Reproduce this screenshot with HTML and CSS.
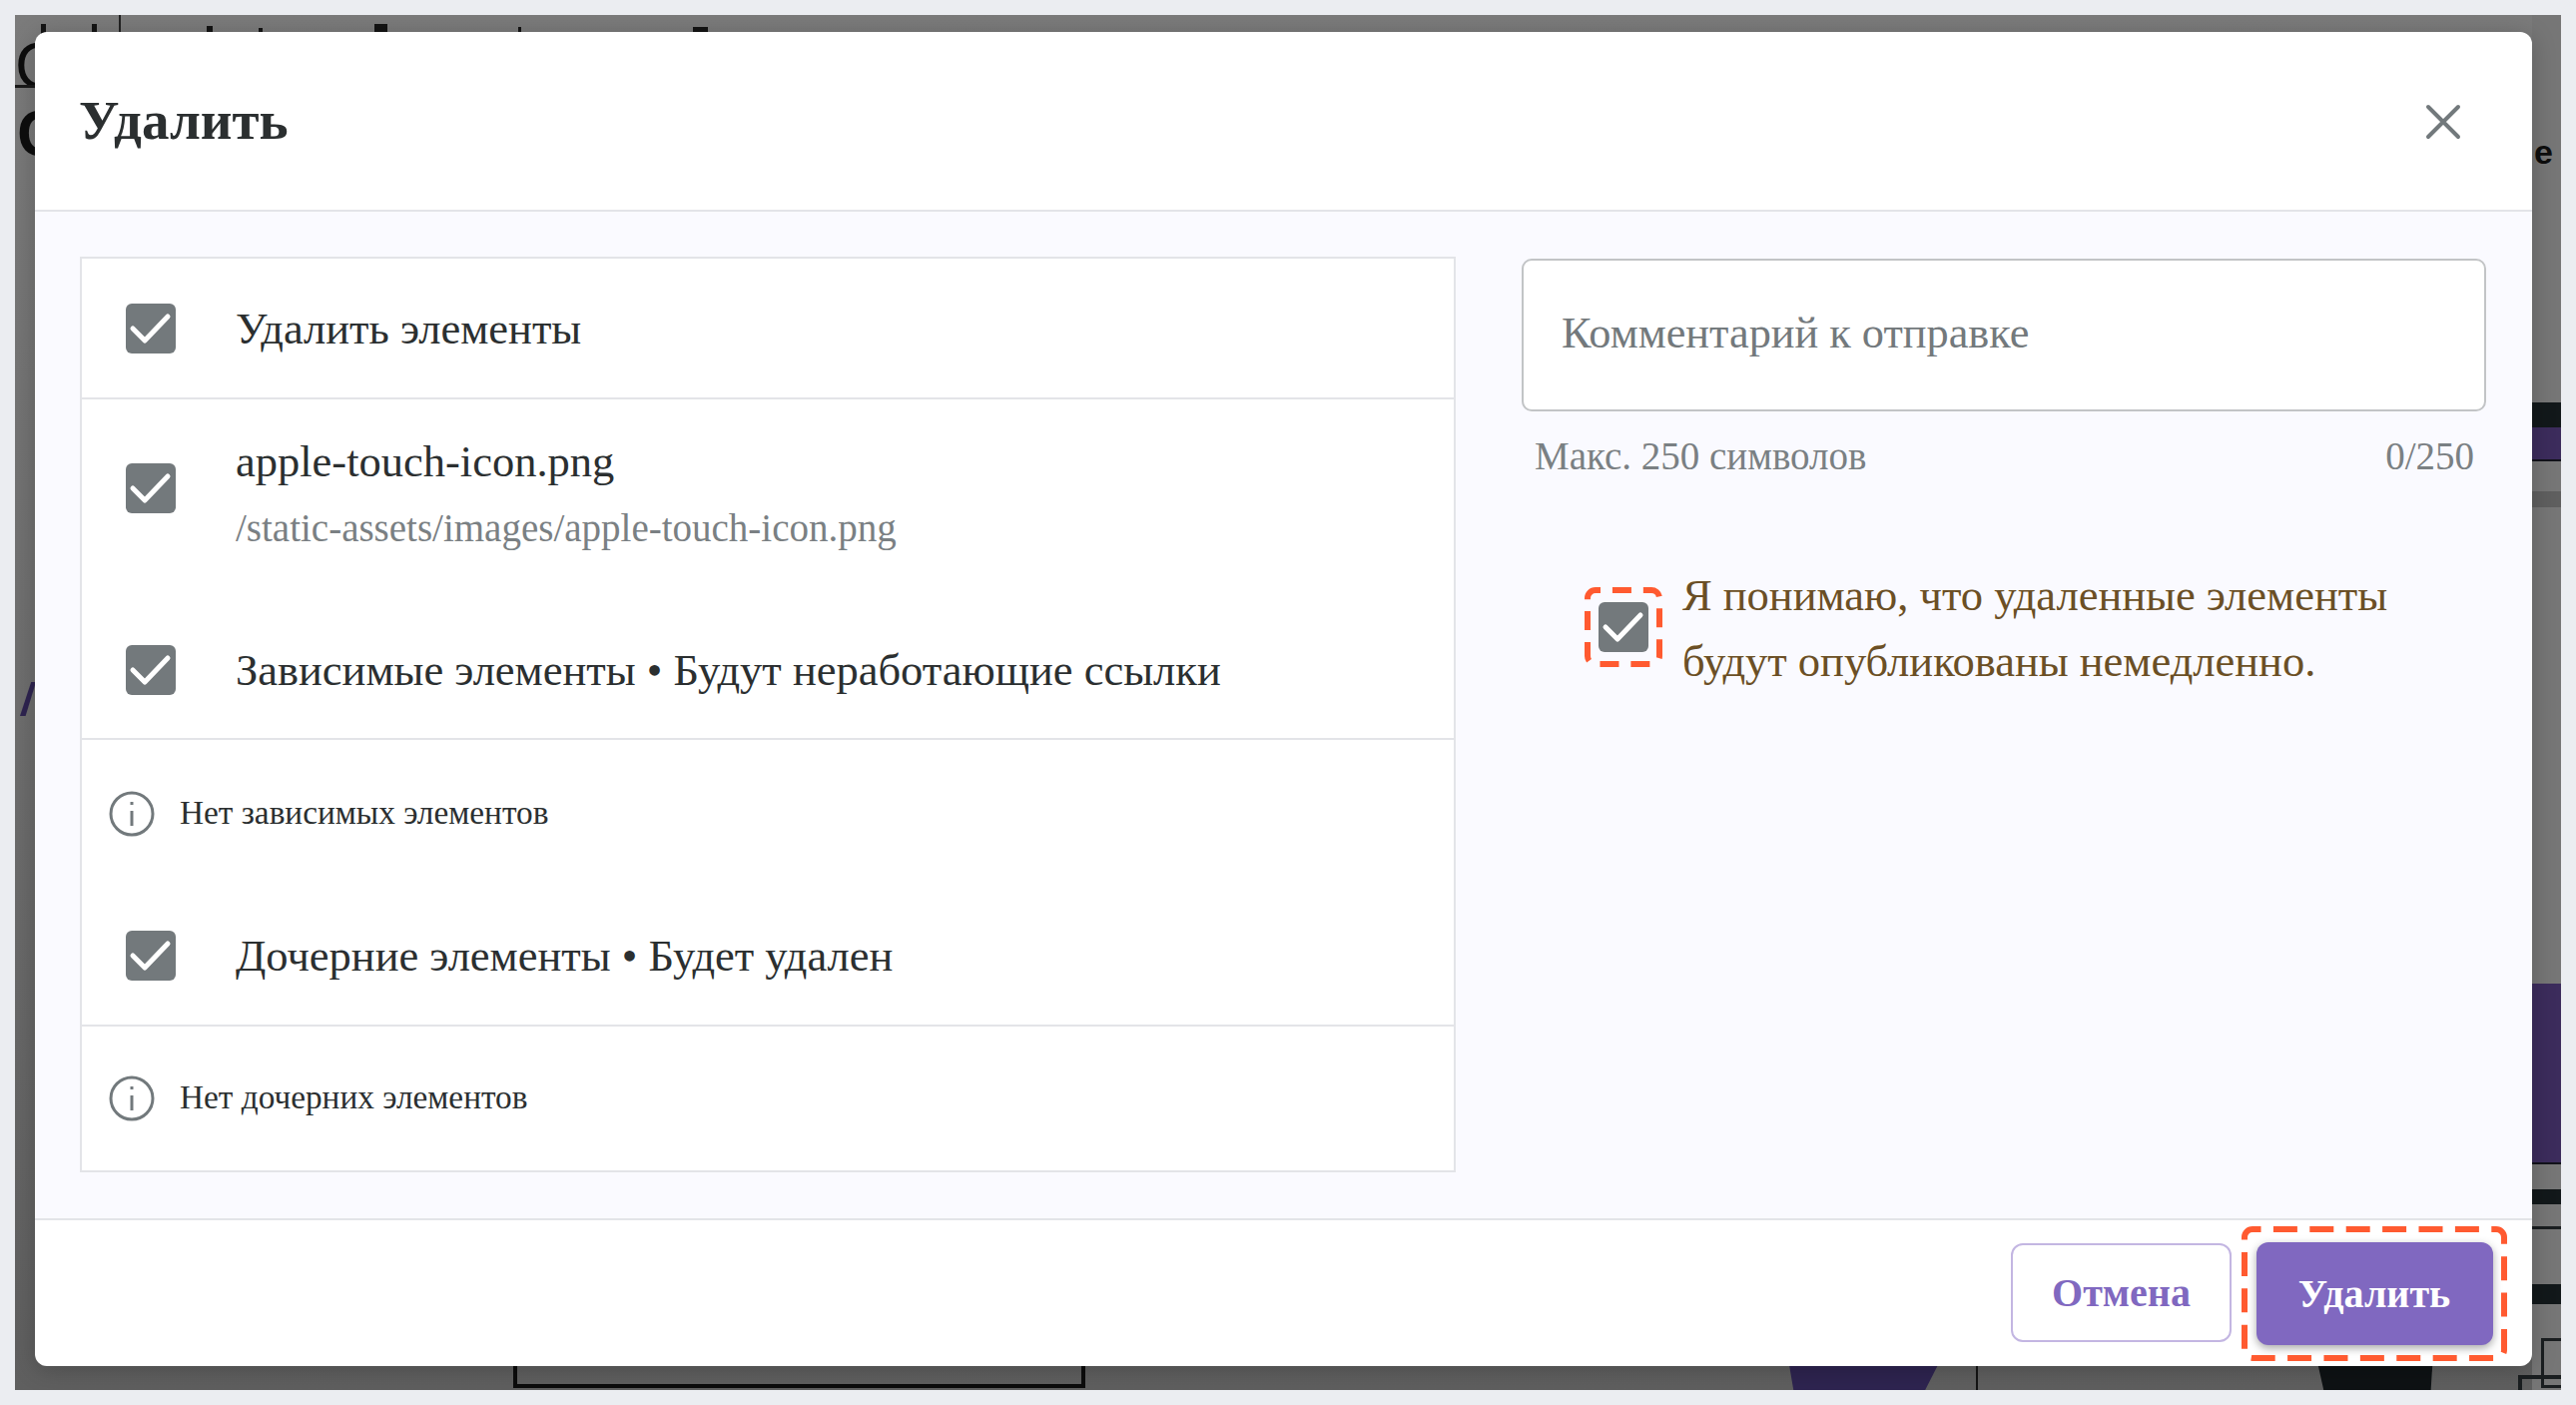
FILE: index.html
```html
<!DOCTYPE html>
<html lang="ru">
<head>
  <meta charset="UTF-8" />
  <title>Удалить</title>
  <link rel="stylesheet" href="styles.css">
</head>
<body>
  <div class="backdrop">
    <!-- page behind the dialog -->
    <div class="bg-shape bg-right-strip"></div>
    <div class="bg-text bg-letter-a">С</div>
    <div class="bg-text bg-letter-b">С</div>
    <div class="bg-text bg-letter-e">е</div>
    <div class="bg-shape bg-rule"></div>
    <div class="bg-shape bg-vline"></div>
    <div class="bg-shape bg-tick tick-a"></div>
    <div class="bg-shape bg-tick tick-b"></div>
    <div class="bg-shape bg-tick tick-c"></div>
    <div class="bg-shape bg-tick tick-d"></div>
    <div class="bg-shape bg-tick tick-e"></div>
    <div class="bg-shape bg-tick tick-f"></div>
    <div class="bg-shape bg-tick tick-g"></div>
    <div class="bg-shape bg-dark-band"></div>
    <div class="bg-shape bg-purple-band"></div>
    <div class="bg-shape bg-grey-band"></div>
    <div class="bg-shape bg-slash"></div>
    <div class="bg-shape bg-frame"></div>
    <div class="bg-shape bg-figure"></div>
    <div class="bg-shape bg-figure-arc"></div>
    <div class="bg-shape bg-figure-dark"></div>
    <div class="bg-shape bg-purple-long"></div>
    <div class="bg-shape bg-stripe-a"></div>
    <div class="bg-shape bg-stripe-b"></div>
    <div class="bg-shape bg-stripe-c"></div>
    <div class="bg-shape bg-box-a"></div>
    <div class="bg-shape bg-box-b"></div>

    <div class="modal">
      <div class="modal-header">
        <h2 class="modal-title">Удалить</h2>
        <button class="close-button" aria-label="Закрыть">
          <svg width="36" height="36" viewBox="0 0 36 36"><path d="M3 3 L33 33 M33 3 L3 33" /></svg>
        </button>
      </div>

      <div class="modal-body">
        <div class="item-list">
          <div class="row row-head">
            <span class="checkbox"><svg viewBox="0 0 50 50"><path d="M7 25 L19 37 L42 13" /></svg></span>
            <span class="row-label">Удалить элементы</span>
          </div>
          <div class="row row-file">
            <span class="checkbox"><svg viewBox="0 0 50 50"><path d="M7 25 L19 37 L42 13" /></svg></span>
            <div class="file-info">
              <div class="row-label">apple-touch-icon.png</div>
              <div class="file-path">/static-assets/images/apple-touch-icon.png</div>
            </div>
          </div>
          <div class="row row-section">
            <span class="checkbox"><svg viewBox="0 0 50 50"><path d="M7 25 L19 37 L42 13" /></svg></span>
            <span class="row-label">Зависимые элементы • Будут неработающие ссылки</span>
          </div>
          <div class="row row-info">
            <svg class="info-icon" viewBox="0 0 46 46"><circle cx="23" cy="23" r="21" /><path d="M23 20 V35" /><path class="info-dot" d="M23 11 V14" /></svg>
            <span class="info-text">Нет зависимых элементов</span>
          </div>
          <div class="row row-section row-section-b">
            <span class="checkbox"><svg viewBox="0 0 50 50"><path d="M7 25 L19 37 L42 13" /></svg></span>
            <span class="row-label">Дочерние элементы • Будет удален</span>
          </div>
          <div class="row row-info row-info-last">
            <svg class="info-icon" viewBox="0 0 46 46"><circle cx="23" cy="23" r="21" /><path d="M23 20 V35" /><path class="info-dot" d="M23 11 V14" /></svg>
            <span class="info-text">Нет дочерних элементов</span>
          </div>
        </div>

        <div class="side">
          <div class="comment-box">Комментарий к отправке</div>
          <div class="comment-hint">
            <span>Макс. 250 символов</span>
            <span>0/250</span>
          </div>
          <div class="confirm">
            <span class="dashed dashed-check">
              <svg class="dash-frame" width="78" height="80"><rect x="3" y="3" width="72" height="74" rx="8" stroke-dasharray="19 11.92" stroke-dashoffset="14" /></svg>
              <span class="checkbox"><svg viewBox="0 0 50 50"><path d="M7 25 L19 37 L42 13" /></svg></span>
            </span>
            <span class="confirm-text">Я понимаю, что удаленные элементы будут опубликованы немедленно.</span>
          </div>
        </div>
      </div>

      <div class="modal-footer">
        <button class="btn btn-cancel">Отмена</button>
        <span class="dashed dashed-btn">
          <svg class="dash-frame" width="266" height="135"><rect x="3" y="3" width="260" height="129" rx="8" stroke-dasharray="24 12.4" stroke-dashoffset="15.5" /></svg>
          <button class="btn btn-delete">Удалить</button>
        </span>
      </div>
    </div>
  </div>
</body>
</html>
```

FILE: styles.css
```css
* {
  box-sizing: border-box;
}

body {
  margin: 0;
  height: 1407px;
  padding: 15px;
  overflow: hidden;
  background-color: #ebedf1;
  font-family: "Liberation Serif", "Times New Roman", serif;
  color: #2b2f30;
}

.backdrop {
  position: relative;
  width: 2550px;
  height: 1377px;
  padding: 17px 29px 24px 20px;
  overflow: hidden;
  background: linear-gradient(180deg, #7b7b7b 0%, #6e6e6e 50%, #5f5f5f 100%);
}

.bg-text {
  position: absolute;
  font-family: "Liberation Sans", sans-serif;
  font-weight: bold;
  color: #0d0d0d;
}

.bg-letter-a {
  left: 0;
  top: 14px;
  font-size: 64px;
  font-weight: normal;
}

.bg-letter-b {
  left: 2px;
  top: 82px;
  font-size: 64px;
}

.bg-letter-e {
  left: 2523px;
  top: 118px;
  font-size: 34px;
}

.bg-shape {
  position: absolute;
}

.bg-right-strip {
  left: 2521px;
  top: 0;
  width: 29px;
  height: 100%;
  background: #767676;
}

.bg-rule {
  left: 0;
  top: 70px;
  width: 24px;
  height: 3px;
  background: #1a1a1a;
}

.bg-vline {
  left: 104px;
  top: 0;
  width: 2px;
  height: 20px;
  background: #222;
}

.bg-tick {
  top: 9px;
  height: 10px;
  background: #141414;
}

.tick-a {
  left: 26px;
  width: 5px;
}

.tick-b {
  left: 77px;
  width: 5px;
}

.tick-c {
  left: 192px;
  top: 11px;
  width: 6px;
}

.tick-d {
  left: 244px;
  top: 13px;
  width: 4px;
}

.tick-e {
  left: 360px;
  width: 13px;
}

.tick-f {
  left: 504px;
  top: 12px;
  width: 3px;
}

.tick-g {
  left: 679px;
  top: 12px;
  width: 15px;
}

.bg-dark-band {
  left: 2521px;
  top: 388px;
  width: 29px;
  height: 25px;
  background: #12181a;
}

.bg-purple-band {
  left: 2521px;
  top: 413px;
  width: 29px;
  height: 34px;
  background: #3c2c5c;
  border-bottom: 2px solid #12121a;
}

.bg-grey-band {
  left: 2521px;
  top: 477px;
  width: 29px;
  height: 16px;
  background: #5f5f5f;
}

.bg-slash {
  left: 5px;
  top: 668px;
  width: 16px;
  height: 34px;
  background: #2e2450;
  clip-path: polygon(70% 0, 100% 0, 35% 100%, 0 100%);
}

.bg-frame {
  left: 499px;
  top: 1340px;
  width: 573px;
  height: 35px;
  border: 4px solid #0c0c0c;
  border-top: none;
}

.bg-figure {
  left: 1775px;
  top: 1340px;
  width: 157px;
  height: 37px;
  background: #2e2450;
  clip-path: polygon(0 0, 100% 0, 88% 100%, 4% 100%);
}

.bg-figure-arc {
  left: 1960px;
  top: 1340px;
  width: 6px;
  height: 37px;
  border-right: 2px solid #141414;
}

.bg-figure-dark {
  left: 2304px;
  top: 1340px;
  width: 118px;
  height: 37px;
  background: #0e1214;
  clip-path: polygon(0 0, 100% 0, 98% 100%, 7% 100%);
}

.bg-purple-long {
  left: 2521px;
  top: 970px;
  width: 29px;
  height: 181px;
  background: #3c2c5c;
  border-bottom: 2px solid #12121a;
}

.bg-stripe-a {
  left: 2521px;
  top: 1176px;
  width: 29px;
  height: 15px;
  background: #12181a;
}

.bg-stripe-b {
  left: 2521px;
  top: 1271px;
  width: 29px;
  height: 20px;
  background: #12181a;
}

.bg-stripe-c {
  left: 2521px;
  top: 1213px;
  width: 29px;
  height: 3px;
  background: #1a1e20;
}

.bg-box-a {
  left: 2530px;
  top: 1325px;
  width: 40px;
  height: 50px;
  border: 3px solid #1a1e20;
}

.bg-box-b {
  left: 2507px;
  top: 1362px;
  width: 60px;
  height: 40px;
  border: 4px solid #1a1e20;
}

.modal {
  position: relative;
  width: 2501px;
  height: 1336px;
  display: flex;
  flex-direction: column;
  border-radius: 12px;
  overflow: hidden;
  background: #fff;
  box-shadow: 0 4px 24px rgba(0, 0, 0, 0.22);
}

.modal-header {
  height: 180px;
  flex-shrink: 0;
  display: flex;
  align-items: center;
  justify-content: space-between;
  padding: 0 71px 0 44px;
  border-bottom: 2px solid #e3e4e8;
}

.modal-title {
  margin: 0 0 2px;
  font-size: 55px;
  font-weight: bold;
}

.close-button {
  margin-top: 2px;
  padding: 0;
  border: none;
  background: none;
  display: flex;
}

.close-button path {
  fill: none;
  stroke: #72797c;
  stroke-width: 4;
  stroke-linecap: round;
}

.modal-body {
  flex: 1;
  display: flex;
  gap: 66px;
  padding: 45px 46px 46px 45px;
  background: #fafaff;
}

.item-list {
  width: 1378px;
  flex-shrink: 0;
  display: flex;
  flex-direction: column;
  border: 2px solid #e3e4e8;
  background: #fff;
}

.row {
  display: flex;
  align-items: center;
  padding-left: 44px;
}

.row-head {
  height: 141px;
  border-bottom: 2px solid #e3e4e8;
}

.row-file {
  height: 219px;
  padding-bottom: 41px;
}

.row-section {
  height: 122px;
  padding-bottom: 16px;
  border-bottom: 2px solid #e3e4e8;
}

.row-section-b {
  height: 139px;
  padding-bottom: 1px;
}

.row-info {
  height: 148px;
  padding-left: 27px;
  padding-bottom: 0;
}

.row-info-last {
  flex: 1;
}

.checkbox {
  width: 50px;
  height: 50px;
  flex-shrink: 0;
  display: block;
  border-radius: 6px;
  background: #73797c;
}

.checkbox svg {
  display: block;
  width: 50px;
  height: 50px;
}

.checkbox path {
  fill: none;
  stroke: #fff;
  stroke-width: 5;
  stroke-linecap: round;
  stroke-linejoin: round;
}

.row-label {
  margin-left: 60px;
  font-size: 44.5px;
  line-height: 58px;
}

.file-info {
  margin-top: 6px;
}

.file-path {
  margin-top: 15px;
  margin-left: 60px;
  font-size: 39px;
  line-height: 45px;
  color: #7a8083;
}

.info-icon {
  width: 46px;
  height: 46px;
  flex-shrink: 0;
}

.info-icon circle,
.info-icon path {
  fill: none;
  stroke: #72797c;
  stroke-width: 3;
}

.info-text {
  margin-left: 25px;
  margin-bottom: 2px;
  font-size: 33.3px;
}

.side {
  flex: 1;
  display: flex;
  flex-direction: column;
}

.comment-box {
  height: 153px;
  margin-top: 2px;
  display: flex;
  align-items: center;
  padding: 0 0 4px 38px;
  border: 2px solid #c2c4c6;
  border-radius: 10px;
  background: #fff;
  font-size: 44.3px;
  color: #73797c;
}

.comment-hint {
  display: flex;
  justify-content: space-between;
  padding: 22px 12px 0 13px;
  font-size: 39px;
  color: #7a8083;
}

.confirm {
  display: flex;
  align-items: center;
  margin-top: 81px;
  padding-left: 63px;
}

.confirm-text {
  margin-left: 20px;
  padding-top: 3px;
  font-size: 44.5px;
  line-height: 66px;
  color: #6b4f25;
}

.dashed {
  position: relative;
  display: flex;
  flex-shrink: 0;
  align-items: center;
  justify-content: center;
}

.dash-frame {
  position: absolute;
  left: 0;
  top: 0;
}

.dash-frame rect {
  fill: none;
  stroke: #ff5a30;
  stroke-width: 6;
}

.dashed-check {
  width: 78px;
  height: 80px;
}

.dashed-btn {
  width: 266px;
  height: 135px;
}

.modal-footer {
  height: 148px;
  flex-shrink: 0;
  display: flex;
  align-items: center;
  justify-content: flex-end;
  gap: 10px;
  padding-right: 25px;
  border-top: 2px solid #e3e4e8;
}

.btn {
  border-radius: 12px;
  font-family: inherit;
  font-size: 40px;
  font-weight: bold;
}

.btn-cancel {
  width: 221px;
  height: 99px;
  margin-bottom: 2px;
  border: 2px solid #c3b6e2;
  background: #fff;
  color: #8068c0;
}

.btn-delete {
  width: 237px;
  height: 103px;
  border: none;
  background: #8068c0;
  color: #fff;
  box-shadow: 0 3px 8px rgba(0, 0, 0, 0.35);
}
```
